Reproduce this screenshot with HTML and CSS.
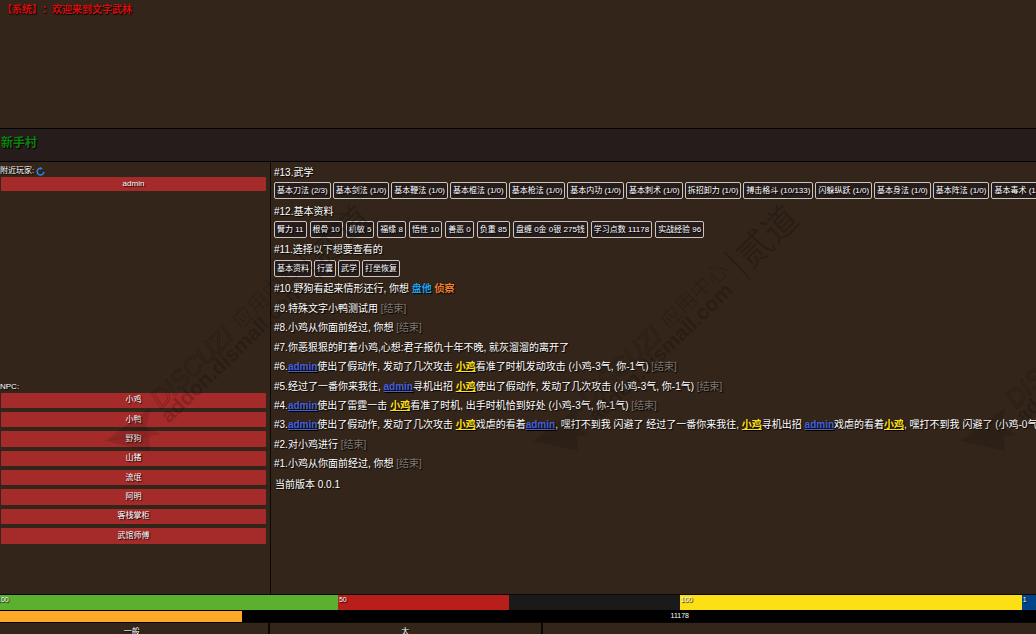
FILE: index.html
```html
<!DOCTYPE html>
<html lang="zh-CN">
<head>
<meta charset="utf-8">
<title>文字武林</title>
<link rel="stylesheet" href="styles.css">
</head>
<body>
<header class="chat"><p class="system">【系统】：欢迎来到文字武林</p></header>
<div class="place"><h1>新手村</h1></div>
<main class="world">
  <aside class="side">
    <section class="group">
      <h2>附近玩家:
        <button class="refresh" aria-label="刷新"><svg viewBox="0 0 16 16" width="9" height="9"><path d="M9 2.2A6 6 0 1 0 14 8.5" fill="none" stroke="#2f7fe0" stroke-width="2.8"/><path d="M7.5 0v5.5L12 2.5z" fill="#2f7fe0"/></svg></button>
      </h2>
      <div class="players"><button class="person">admin</button></div>
    </section>
    <section class="group">
      <h2>NPC:</h2>
      <div class="npcs">
        <button class="person">小鸡</button>
        <button class="person">小鸭</button>
        <button class="person">野狗</button>
        <button class="person">山猪</button>
        <button class="person">流氓</button>
        <button class="person">阿明</button>
        <button class="person">客栈掌柜</button>
        <button class="person">武馆师傅</button>
      </div>
    </section>
  </aside>
  <section class="story">
    <div class="log">
      <p>#13.武学</p>
      <div class="chips"><button>基本刀法 (2/3)</button><button>基本剑法 (1/0)</button><button>基本鞭法 (1/0)</button><button>基本棍法 (1/0)</button><button>基本枪法 (1/0)</button><button>基本内功 (1/0)</button><button>基本刺术 (1/0)</button><button>拆招卸力 (1/0)</button><button>搏击格斗 (10/133)</button><button>闪躲纵跃 (1/0)</button><button>基本身法 (1/0)</button><button>基本阵法 (1/0)</button><button>基本毒术 (1/0)</button></div>
      <p>#12.基本资料</p>
      <div class="chips stats"><button>臂力 11</button><button>根骨 10</button><button>机敏 5</button><button>福缘 8</button><button>悟性 10</button><button>善恶 0</button><button>负重 85</button><button>盘缠 0金 0银 275钱</button><button>学习点数 11178</button><button>实战经验 96</button></div>
      <p>#11.选择以下想要查看的</p>
      <div class="chips"><button>基本资料</button><button>行囊</button><button>武学</button><button>打坐恢复</button></div>
      <p>#10.野狗看起来情形还行, 你想 <a class="ask" href="#">盘他</a> <a class="scout" href="#">侦察</a></p>
      <p>#9.特殊文字小鸭测试用 <span class="end">[结束]</span></p>
      <p>#8.小鸡从你面前经过, 你想 <span class="end">[结束]</span></p>
      <p>#7.你恶狠狠的盯着小鸡,心想:君子报仇十年不晚, 就灰溜溜的离开了</p>
      <p>#6.<a class="me" href="#">admin</a>使出了假动作, 发动了几次攻击 <a class="foe" href="#">小鸡</a>看准了时机发动攻击 (小鸡-3气, 你-1气) <span class="end">[结束]</span></p>
      <p>#5.经过了一番你来我往, <a class="me" href="#">admin</a>寻机出招 <a class="foe" href="#">小鸡</a>使出了假动作, 发动了几次攻击 (小鸡-3气, 你-1气) <span class="end">[结束]</span></p>
      <p>#4.<a class="me" href="#">admin</a>使出了雷霆一击 <a class="foe" href="#">小鸡</a>看准了时机, 出手时机恰到好处 (小鸡-3气, 你-1气) <span class="end">[结束]</span></p>
      <p>#3.<a class="me" href="#">admin</a>使出了假动作, 发动了几次攻击 <a class="foe" href="#">小鸡</a>戏虐的看着<a class="me" href="#">admin</a>, 嘿打不到我 闪避了 经过了一番你来我往, <a class="foe" href="#">小鸡</a>寻机出招 <a class="me" href="#">admin</a>戏虐的看着<a class="foe" href="#">小鸡</a>, 嘿打不到我 闪避了 (小鸡-0气,</p>
      <p>#2.对小鸡进行 <span class="end">[结束]</span></p>
      <p>#1.小鸡从你面前经过, 你想 <span class="end">[结束]</span></p>
    </div>
    <p class="version">当前版本 0.0.1</p>
  </section>
</main>
<section class="gauges">
  <div class="gauge"><div class="fill health" style="width:100%">100</div></div>
  <div class="gauge"><div class="fill blood" style="width:50%">50</div></div>
  <div class="gauge"><div class="fill energy" style="width:100%">100</div></div>
  <div class="gauge"><div class="fill mana" style="width:100%">1</div></div>
</section>
<section class="exp"><div class="earned" style="width:18%"></div><span>11178</span></section>
<nav class="tabs"><button>一般</button><button>太</button></nav>
<svg class="mark" aria-hidden="true">
  <defs>
    <g id="stamp">
      <path class="arrow" d="M105 441L151 407L146 427L161 434L149 437L150 451Z"/>
      <path class="arrow" d="M105 441L146 427L149 437Z"/>
      <g transform="translate(169 424) rotate(-44)">
        <text class="url" x="0" y="0">addon.dismall.com</text>
        <text class="brand" x="4" y="-16">DISCUZ!</text>
        <text class="center" x="117" y="-18">应用中心</text>
        <path d="M210 -35h2v38h-2z"/>
        <text class="name" x="218" y="-4">贰道</text>
        <circle class="dot" cx="297" cy="-32" r="3"/>
      </g>
    </g>
  </defs>
  <use href="#stamp"/>
  <use href="#stamp" x="428"/>
  <use href="#stamp" x="855"/>
</svg>
</body>
</html>
```
FILE: styles.css
```css
* { box-sizing: border-box; }
body {
  margin: 0;
  height: 100vh;
  overflow: hidden;
  position: relative;
  display: flex;
  flex-direction: column;
  background: #33251a;
  color: #fff;
  font: 10px/18px "Liberation Sans", "Noto Sans CJK SC", sans-serif;
  text-shadow: 1px 1px 1px #000;
}
p, h1, h2 { margin: 0; }
button {
  margin: 0;
  padding: 0;
  border: 0;
  background: none;
  color: inherit;
  font: inherit;
  font-size: 8px;
  text-shadow: inherit;
  white-space: nowrap;
}
.chat { flex: 0 0 128px; padding: 1px 2px; }
.system { color: #d80c0c; font-weight: bold; text-spacing-trim: space-all; }
.place {
  flex: 0 0 34px;
  padding: 2px 1px;
  background: #261c1b;
  border-top: 1px solid #060403;
  border-bottom: 1px solid #060403;
}
.place h1 { color: #0a820c; font-size: 12px; line-height: 24px; }
.world { flex: 1; min-height: 0; display: flex; }
.side {
  flex: 0 0 271px;
  display: flex;
  flex-direction: column;
  border-right: 1px solid #0d0906;
}
.group { flex: 1; padding: 2px 4px 0 1px; }
.group h2 {
  display: flex;
  align-items: center;
  gap: 2px;
  margin-left: -1px;
  font-size: 8px;
  font-weight: normal;
  line-height: 12px;
  height: 12px;
}
.refresh { display: flex; }
.group:first-child { padding-top: 3px; }
.players, .npcs { display: grid; grid-auto-rows: 1fr; gap: 4px; }
.players { height: 14px; }
.npcs { height: 151px; }
.person { background: #a52a2a; border-radius: 1px; line-height: 12px; }
.story { flex: 1; min-width: 0; overflow: hidden; padding: 1px 0 0 3px; white-space: nowrap; }
.log { display: grid; grid-auto-rows: 1fr; height: 311px; align-items: center; }
.log a { text-decoration: none; }
.chips { align-self: start; display: flex; gap: 2px; }
.stats { gap: 3px; }
.chips button {
  flex: none;
  height: 17px;
  padding: 0 2px;
  border: 1px solid #cbc5c0;
  border-radius: 2px;
  background: #261c1b;
  line-height: 15px;
}
.log .ask { color: #1ea0e8; font-weight: bold; }
.log .scout { color: #f08030; font-weight: bold; }
.log .me { color: #4461dc; font-weight: bold; text-decoration: underline; }
.log .foe { color: #ffe11a; font-weight: bold; text-decoration: underline; }
.end { color: #7d766f; }
.version { padding: 2px 1px; }
.gauges {
  flex: 0 0 16px;
  display: flex;
  width: 132%;
  margin-left: -4px;
  border-top: 1px solid #0a0705;
  font-size: 7px;
  line-height: 9px;
}
.gauge { flex: 0 0 25%; background: #1a1a1a; display: flex; }
.fill { padding-left: 1px; }
.health { background: #5cb030; }
.blood { background: #b81e1a; }
.energy { background: #fce015; }
.mana { background: #00458a; }
.exp {
  flex: 0 0 12px;
  position: relative;
  display: flex;
  justify-content: center;
  width: 132%;
  margin-left: -4px;
  background: #000;
  border-top: 1px solid #000;
  font-size: 7px;
  line-height: 10px;
}
.earned { position: absolute; left: 0; top: 0; bottom: 0; background: #fca828; }
.tabs {
  flex: 0 0 12px;
  min-height: 0;
  display: flex;
  align-items: flex-start;
  width: 132%;
  margin-left: -4px;
  border-top: 1px solid #0a0705;
}
.tabs button { flex: 0 0 20%; height: 18px; border-right: 2px solid #0a0705; line-height: 18px; }
.mark {
  position: absolute;
  inset: 0;
  width: 100%;
  height: 100%;
  pointer-events: none;
  fill: #000;
  opacity: 0.18;
  text-shadow: none;
}
.arrow { fill-opacity: 0.6; }
.url { font-size: 21px; font-weight: bold; }
.brand { font-size: 26px; font-style: italic; fill: none; stroke: #000; }
.center { font-size: 21px; font-weight: 300; }
.name { font-size: 35px; }
.dot { fill: none; stroke: #000; }
```
